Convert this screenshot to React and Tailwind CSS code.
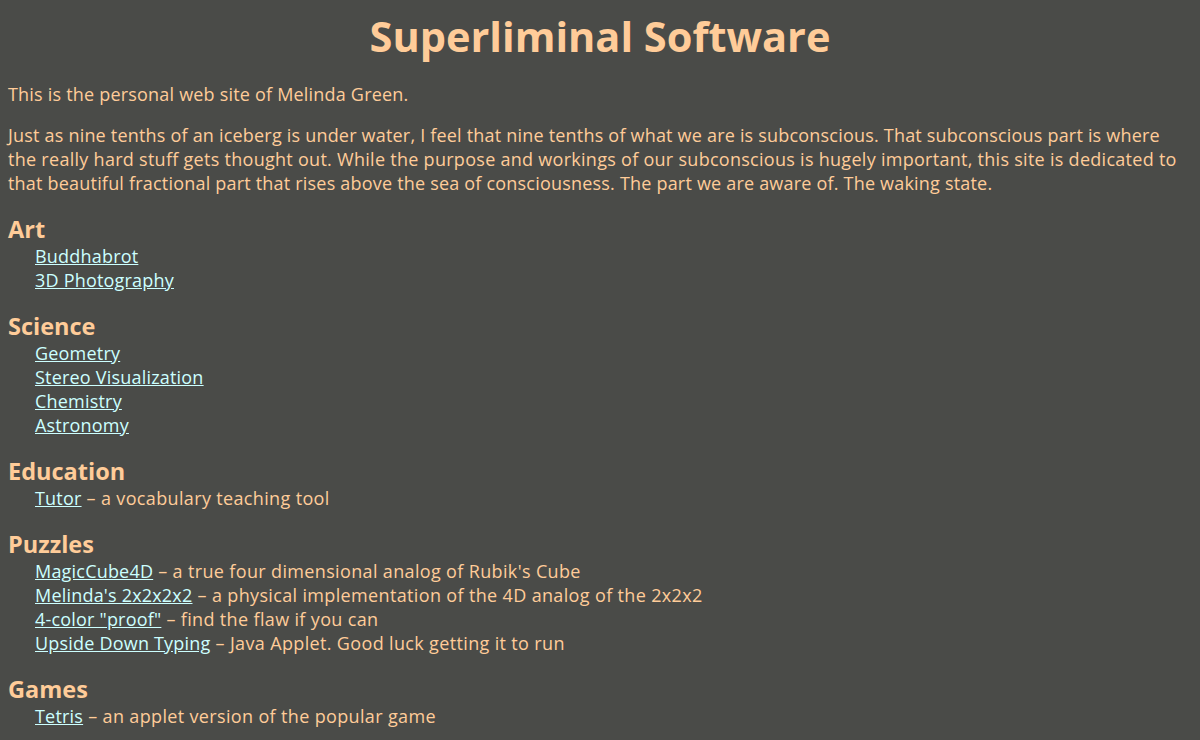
import React from "react";

const sections = [
  { title: "Art", items: [["Buddhabrot"], ["3D Photography"]] },
  {
    title: "Science",
    items: [["Geometry"], ["Stereo Visualization"], ["Chemistry"], ["Astronomy"]],
  },
  { title: "Education", items: [["Tutor", "a vocabulary teaching tool"]] },
  {
    title: "Puzzles",
    items: [
      ["MagicCube4D", "a true four dimensional analog of Rubik's Cube"],
      ["Melinda's 2x2x2x2", "a physical implementation of the 4D analog of the 2x2x2"],
      ['4-color "proof"', "find the flaw if you can"],
      ["Upside Down Typing", "Java Applet. Good luck getting it to run"],
    ],
  },
  { title: "Games", items: [["Tetris", "an applet version of the popular game"]] },
];

export default function App() {
  return (
    <div
      className="min-h-[740px] bg-[#4a4b48] px-2 text-[#ffcc99] text-[18px] leading-[24px] tracking-[0.2px]"
      style={{ fontFamily: "'Open Sans', Lato, sans-serif" }}
    >
      <h1 className="pt-[10px] text-center text-[41.5px] font-bold leading-[52px] tracking-normal">
        Superliminal Software
      </h1>
      <p className="mt-[20px]">This is the personal web site of Melinda Green.</p>
      <p className="mt-[17px] whitespace-nowrap">
        Just as nine tenths of an iceberg is under water, I feel that nine tenths of what we are is subconscious. That subconscious part is where
        <br />
        <span className="tracking-[0.28px]">
          the really hard stuff gets thought out. While the purpose and workings of our subconscious is hugely important, this site is dedicated to
        </span>
        <br />
        that beautiful fractional part that rises above the sea of consciousness. The part we are aware of. The waking state.
      </p>
      {sections.map((s) => (
        <div key={s.title} className="mt-[19px]">
          <h2 className="text-[23.5px] font-bold leading-[30px] tracking-normal">{s.title}</h2>
          <ul className="pl-[27px]">
            {s.items.map(([link, desc]) => (
              <li key={link} className="whitespace-nowrap">
                <a href="#" className="text-[#ccffff] underline">
                  {link}
                </a>
                {desc ? <span className="tracking-[0.35px]"> – {desc}</span> : null}
              </li>
            ))}
          </ul>
        </div>
      ))}
    </div>
  );
}
